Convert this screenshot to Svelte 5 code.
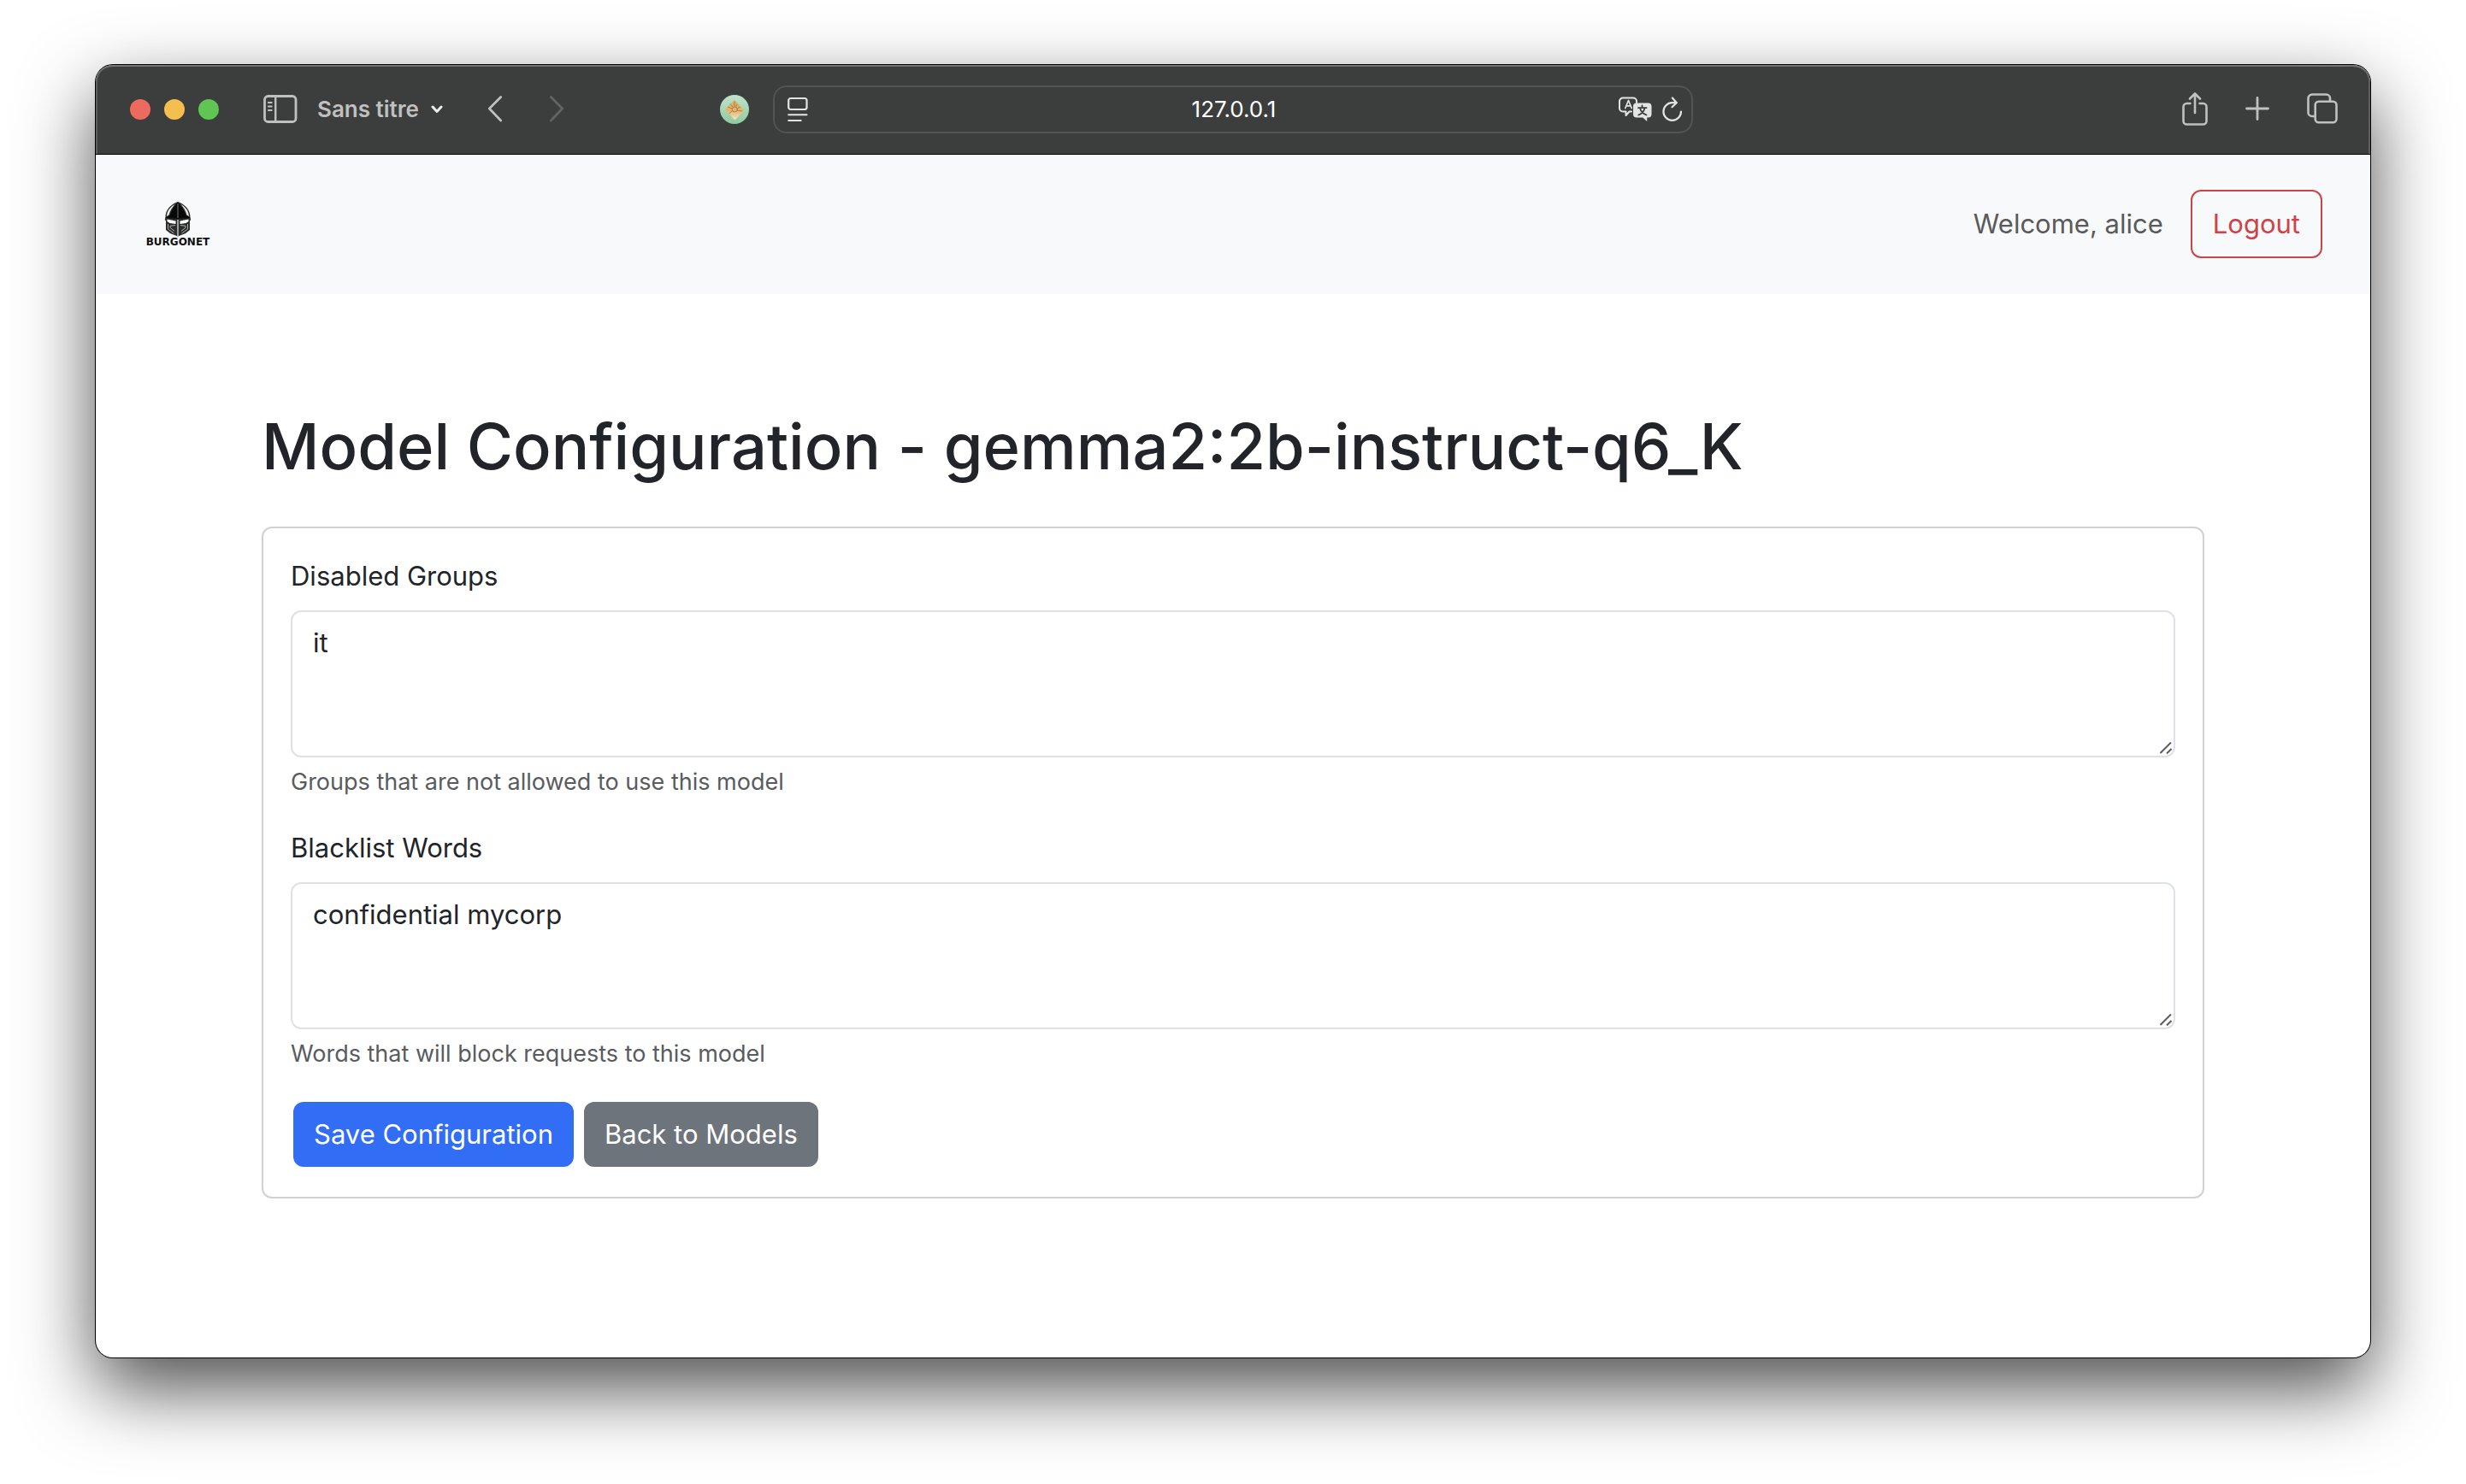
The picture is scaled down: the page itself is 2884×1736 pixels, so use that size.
<script>
  let disabledGroups = $state('it');
  let blacklistWords = $state('confidential mycorp');
  const lights = ['red', 'yellow', 'green'];
</script>

<div class="desktop">
  <div class="window">
    <div class="toolbar">
      <div class="side left">
        <div class="lights">
          {#each lights as light}
            <button class="light {light}" type="button" aria-label={light}></button>
          {/each}
        </div>
        <button class="tool sidebar" type="button" aria-label="Sidebar">
          <svg width="40" height="34" viewBox="0 0 40 34" fill="none" stroke="currentColor">
            <rect x="1.5" y="1.5" width="36.5" height="30" rx="4" stroke-width="2.8" />
            <path d="M14.2 2v29" stroke-width="2.4" />
            <path d="M5.8 9h4M5.8 13.500h4M5.8 18h4" stroke-width="1.8" stroke-linecap="round" />
          </svg>
        </button>
        <button class="tool profile" type="button">
          Sans titre
          <svg width="14" height="10" viewBox="0 0 14 10" fill="none" stroke="#ececec" stroke-width="3" stroke-linecap="round" stroke-linejoin="round">
            <path d="M2 2l5 5.4L12 2" />
          </svg>
        </button>
        <button class="tool back" type="button" aria-label="Back">
          <svg width="18" height="32" viewBox="0 0 18 32" fill="none" stroke="currentColor" stroke-width="2.7" stroke-linecap="round" stroke-linejoin="round">
            <path d="M15.7 1.500L2.3 15l13.4 14" />
          </svg>
        </button>
        <button class="tool forward" type="button" aria-label="Forward" disabled>
          <svg width="18" height="32" viewBox="0 0 18 32" fill="none" stroke="currentColor" stroke-width="2.7" stroke-linecap="round" stroke-linejoin="round">
            <path d="M2.3 1.500l13.4 13.500L2.3 29" />
          </svg>
        </button>
        <button class="tool extension" type="button" aria-label="Extension">
          <svg width="34" height="34" viewBox="0 0 34 34" fill="none">
            <defs>
              <linearGradient id="mint" x1="0" y1="0" x2="0" y2="1">
                <stop offset="0" stop-color="#bfe3cb" />
                <stop offset="1" stop-color="#8fcaa0" />
              </linearGradient>
              <linearGradient id="sand" x1="0" y1="0" x2="0" y2="1">
                <stop offset="0" stop-color="#e0aa62" />
                <stop offset=".55" stop-color="#e6b671" />
                <stop offset="1" stop-color="#f7e6cf" />
              </linearGradient>
            </defs>
            <circle cx="17" cy="17" r="17" fill="url(#mint)" />
            <path d="M17 6l11.5 12L17.5 29.5 5.5 17z" fill="url(#sand)" />
            <circle cx="17.2" cy="17" r="3" stroke="#a3814f" stroke-width="1" />
            <path d="M12 10.5l3.500 4M17 7.500v6M9 14l5 2M20 11l-1.500 3.500M24 14l-4 2M26 19l-6-1M10.500 22l4-3.500" stroke="#a3814f" stroke-width="1" />
          </svg>
        </button>
      </div>

      <div class="address">
        <svg width="24" height="30" viewBox="0 0 24 30" fill="none" stroke="currentColor" stroke-linecap="round">
          <rect x="1.2" y="2" width="21.3" height="13" rx="2.5" stroke-width="2.2" />
          <path d="M1.2 21.3h21.3M1.2 28h14.5" stroke-width="2" />
        </svg>
        <input type="text" value="127.0.0.1" aria-label="Address" />
        <button class="tool" type="button" aria-label="Translate">
          <svg width="39" height="30" viewBox="0 0 39 30" fill="none" stroke="currentColor" stroke-linecap="round" stroke-linejoin="round">
            <path d="M15 17.5h-2.500L8.500 22v-4.500H5a4 4 0 0 1-4-4V5.500a4 4 0 0 1 4-4h12a4 4 0 0 1 4 4V7" stroke-width="2" />
            <path d="M7.800 13.500l3.700-9 3.700 9M9 10.800h5" stroke-width="1.7" />
            <path d="M21 7.500h13.500a4 4 0 0 1 4 4v9a4 4 0 0 1-4 4h-1.300V29l-5-4.500H21a4 4 0 0 1-4-4v-9a4 4 0 0 1 4-4z" fill="currentColor" stroke="none" />
            <path d="M27.500 10.300v2.200M23 13.200h9.500M30.500 13.500c-1 3.800-3.500 6.500-7.300 8M25 13.500c1 3.800 3.600 6.500 7.500 8" stroke="#3c3e3d" stroke-width="1.8" />
          </svg>
        </button>
        <button class="tool" type="button" aria-label="Reload">
          <svg width="24" height="30" viewBox="0 0 24 30" fill="none" stroke="currentColor" stroke-width="2.2" stroke-linecap="round" stroke-linejoin="round">
            <path d="M22 17.500A10.300 10.300 0 1 1 11.700 7.200h4.600" />
            <path d="M11.800 1.500l5 5.700-5.300 5" />
          </svg>
        </button>
      </div>

      <div class="side right">
        <button class="tool" type="button" aria-label="Share">
          <svg width="30" height="40" viewBox="0 0 30 40" fill="none" stroke="currentColor" stroke-width="2.6" stroke-linecap="round" stroke-linejoin="round">
            <path d="M9.500 14H5.500a4 4 0 0 0-4 4v16.500a4 4 0 0 0 4 4h19a4 4 0 0 0 4-4V18a4 4 0 0 0-4-4h-4" />
            <path d="M15 25V3M9 8.500L15 2.500l6 6" />
          </svg>
        </button>
        <button class="tool" type="button" aria-label="New tab">
          <svg width="28" height="28" viewBox="0 0 28 28" fill="none" stroke="currentColor" stroke-width="2.8" stroke-linecap="round">
            <path d="M14 1.500v25M1.500 14h25" />
          </svg>
        </button>
        <button class="tool" type="button" aria-label="Tab overview">
          <svg width="36" height="36" viewBox="0 0 36 36" fill="none" stroke="currentColor" stroke-width="2.6">
            <rect x="9.7" y="9.7" width="24.8" height="24.5" rx="4" />
            <path d="M9.500 27H6a4.500 4.500 0 0 1-4.500-4.500V6A4.500 4.500 0 0 1 6 1.500h16.500A4.500 4.500 0 0 1 27 6v3.500" />
          </svg>
        </button>
      </div>
    </div>

    <header class="navbar">
      <a class="brand" href="/" aria-label="Burgonet">
        <svg width="32" height="42" viewBox="0 0 32 42" fill="none">
          <path d="M16 1C8 4 1.500 10 1.500 19L.8 22l1.200 1.500V34l5 4 9 3.500 9-3.500 5-4V23.500l1.200-1.500-.7-3C30.500 10 24 4 16 1z" fill="#2b2b2b" />
          <path d="M12.500 4C6.500 7.500 3.300 12 3 18l2.500-1.500C7 11 9.500 7.500 12.500 4zM19.500 4c6 3.500 9.200 8 9.500 14l-2.500-1.500C25 11 22.500 7.500 19.500 4z" fill="#e9eaec" />
          <path d="M16 1.500C11 7 8 12 6.500 17L1.500 20l14.500 1 14.500-1-5-3C24 12 21 7 16 1.500z" fill="#080808" />
          <path d="M16 3v17" stroke="#777" stroke-width="1" />
          <path d="M3.500 21.500l10 2v3.500l-7-1-3-2zM28.500 21.500l-10 2v3.500l7-1 3-2z" fill="#fff" />
          <path d="M16 22v19" stroke="#c4c6c8" stroke-width="1.5" />
          <path d="M4.500 27v6l7 5M27.500 27v6l-7 5M13 28.500l-6 .8v2l5 4M19 28.500l6 .8v2l-5 4" stroke="#aeb0b2" stroke-width="1" />
        </svg>
        <span>BURGONET</span>
      </a>
      <div class="account">
        <span class="welcome">Welcome, alice</span>
        <button class="btn outline" type="button">Logout</button>
      </div>
    </header>

    <main>
      <h1>Model Configuration - gemma2:2b-instruct-q6_K</h1>
      <form class="card">
        <div class="field">
          <label for="groups">Disabled Groups</label>
          <div class="area">
            <textarea id="groups" rows="3" aria-describedby="groups-help" bind:value={disabledGroups}></textarea>
            {@render grip()}
          </div>
          <p class="help" id="groups-help">Groups that are not allowed to use this model</p>
        </div>
        <div class="field">
          <label for="words">Blacklist Words</label>
          <div class="area">
            <textarea id="words" rows="3" aria-describedby="words-help" bind:value={blacklistWords}></textarea>
            {@render grip()}
          </div>
          <p class="help" id="words-help">Words that will block requests to this model</p>
        </div>
        <div class="actions">
          <button class="btn primary" type="button">Save Configuration</button>
          <button class="btn secondary" type="button">Back to Models</button>
        </div>
      </form>
    </main>
  </div>
</div>

{#snippet grip()}
  <svg class="grip" width="14" height="14" viewBox="0 0 14 14" fill="none" stroke="#5c5c5c" stroke-width="2">
    <path d="M.5 13L13 .5M8 13.500l5.500-5.500" />
  </svg>
{/snippet}

<style>
  :global(body) {
    margin: 0;
    background: #fff;
  }
  .desktop {
    box-sizing: border-box;
    min-height: 100vh;
    padding: 76px 112px 148px;
    display: flex;
    font-family: Inter, 'Liberation Sans', sans-serif;
    font-size: 31px;
    line-height: 48px;
    color: #212529;
  }
  .window {
    flex: 1;
    min-width: 0;
    display: flex;
    flex-direction: column;
    background: #fff;
    border-radius: 20px;
    box-shadow: 0 0 0 1px #000, 0 36px 88px rgba(0, 0, 0, 0.7);
  }
  button,
  input,
  textarea {
    font: inherit;
    color: inherit;
  }
  svg {
    display: block;
    flex: none;
  }

  .toolbar {
    box-sizing: border-box;
    height: 105px;
    display: grid;
    grid-template-columns: 1fr minmax(0, 1076px) 1fr;
    align-items: center;
    background: #3c3e3d;
    color: #bfc0bf;
    border-bottom: 1px solid #000;
    border-radius: 20px 20px 0 0;
    box-shadow: inset 0 2px 0 #737473, inset 2px 0 0 #5d5e5d, inset -2px 0 0 #5d5e5d;
    font-size: 26px;
    line-height: 32px;
  }
  .side {
    display: flex;
    align-items: center;
  }
  .left {
    padding: 0 28px 0 40px;
  }
  .right {
    justify-content: flex-end;
    gap: 44px;
    padding: 0 38px 2px 0;
  }
  .lights {
    display: flex;
    gap: 16px;
  }
  .light {
    width: 24px;
    height: 24px;
    padding: 0;
    border: 0;
    border-radius: 50%;
  }
  .red { background: #ed6a5e; }
  .yellow { background: #f5bf4f; }
  .green { background: #61c554; }
  .tool {
    display: flex;
    align-items: center;
    padding: 0;
    border: 0;
    background: none;
  }
  .sidebar { margin-left: 52px; }
  .profile {
    gap: 14px;
    margin-left: 23px;
    font-weight: 600;
    white-space: nowrap;
  }
  .back { margin-left: 52px; }
  .forward {
    margin-left: 54px;
    color: #626362;
  }
  .extension { margin-left: auto; }
  .address {
    box-sizing: border-box;
    height: 56px;
    display: flex;
    align-items: center;
    gap: 12px;
    padding: 0 10px 0 15px;
    border: 2px solid #525352;
    border-radius: 16px;
    color: #e2e3e2;
  }
  .address input {
    flex: 1;
    min-width: 0;
    padding: 0 0 0 48px;
    border: 0;
    outline: 0;
    background: none;
    color: #fff;
    text-align: center;
  }

  .navbar {
    display: flex;
    align-items: center;
    justify-content: space-between;
    padding: 41px 56px 42px;
    background: #f8f9fb;
  }
  .brand {
    width: 80px;
    height: 80px;
    display: flex;
    flex-direction: column;
    align-items: center;
    justify-content: center;
    color: #111;
    font: bold 12px/12px 'DejaVu Sans', sans-serif;
    text-decoration: none;
  }
  .account {
    display: flex;
    align-items: center;
    gap: 32px;
  }
  .welcome { color: #595a5a; }

  .btn {
    padding: 14px 24px;
    border: 0;
    border-radius: 12px;
    color: #fff;
  }
  .outline {
    border: 2px solid #cb444a;
    background: none;
    color: #cb444a;
  }
  .primary { background: #326df6; }
  .secondary { background: #6d747b; }

  main {
    padding: 130px 194px;
  }
  h1 {
    margin: 0 0 46px;
    font-size: 74px;
    line-height: 96px;
    font-weight: 500;
  }
  .card {
    padding: 32px;
    border: 2px solid #d0d1d2;
    border-radius: 12px;
  }
  .field { margin-bottom: 32px; }
  label {
    display: block;
    margin-bottom: 16px;
  }
  .area {
    position: relative;
  }
  textarea {
    box-sizing: border-box;
    display: block;
    width: 100%;
    padding: 12px 24px;
    border: 2px solid #dee2e6;
    border-radius: 12px;
    background: #fff;
    resize: none;
    outline: 0;
  }
  .grip {
    position: absolute;
    right: 4px;
    bottom: 4px;
    pointer-events: none;
  }
  .help {
    margin: 8px 0 0;
    font-size: 27px;
    line-height: 42px;
    color: #595c5f;
  }
  .actions {
    display: flex;
    gap: 12px;
    padding: 3px;
  }
</style>
